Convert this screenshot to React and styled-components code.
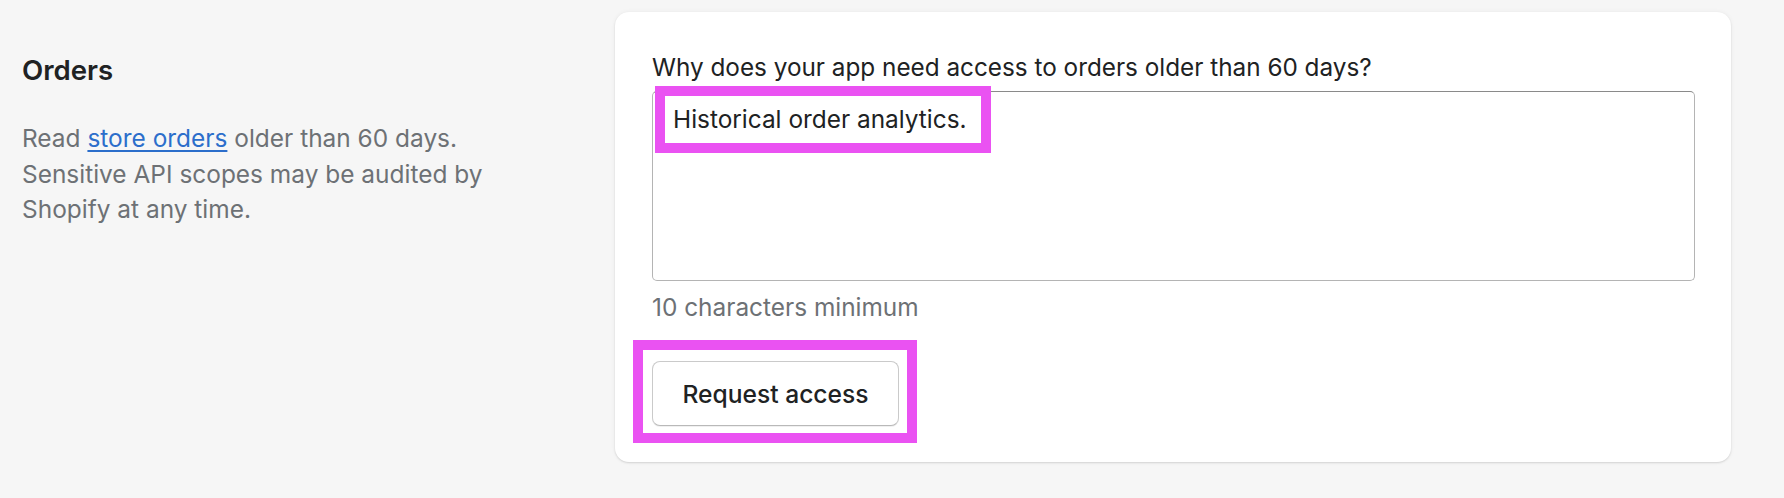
import React from "react";
import styled, { createGlobalStyle } from "styled-components";

const GlobalStyle = createGlobalStyle`
  html, body {
    margin: 0;
    padding: 0;
    background: #f6f6f6;
  }
  body {
    font-family: Inter, "Noto Sans", "Liberation Sans", sans-serif;
    -webkit-font-smoothing: antialiased;
  }
  * { box-sizing: border-box; }
`;

const Page = styled.main`
  display: grid;
  grid-template-columns: 593px 1116px;
  align-items: start;
  padding: 12px 0 0 22px;
  min-height: 498px;
`;

const Aside = styled.section`
  padding-top: 40px;
`;

const Heading = styled.h2`
  margin: 0;
  font-size: 27.6px;
  line-height: 36px;
  font-weight: 600;
  color: #202223;
`;

const Description = styled.p`
  margin: 33px 0 0;
  max-width: 490px;
  font-size: 24.45px;
  line-height: 35.6px;
  color: #6d7175;
`;

const Link = styled.a`
  color: #2c6ecb;
  text-decoration: underline;
  text-underline-offset: 3px;
  text-decoration-thickness: 2px;
`;

const Card = styled.div`
  background: #ffffff;
  border-radius: 14px;
  padding: 37px 36px 36px 37px;
  box-shadow: 0 0 5px rgba(23, 24, 24, 0.05), 0 1px 2px rgba(0, 0, 0, 0.12);
`;

const Label = styled.label`
  display: block;
  margin-bottom: 6px;
  font-size: 24.3px;
  line-height: 36px;
  color: #202223;
`;

const Field = styled.div`
  position: relative;
`;

const TextArea = styled.textarea`
  display: block;
  width: 100%;
  height: 190px;
  margin: 0;
  padding: 9px 20px;
  border: 1px solid #b4b4b4;
  border-top-color: #8a8a8a;
  border-radius: 5px;
  background: #ffffff;
  font-family: inherit;
  font-size: 24.4px;
  line-height: 36px;
  color: #202223;
  resize: none;
  outline: none;
`;

const Highlight = styled.span`
  position: absolute;
  top: ${(p) => p.$top}px;
  left: ${(p) => p.$left}px;
  width: ${(p) => p.$width}px;
  height: ${(p) => p.$height}px;
  border: 10px solid #ea52f2;
  pointer-events: none;
`;

const Help = styled.div`
  margin-top: 8px;
  font-size: 24.4px;
  line-height: 36px;
  color: #6d7175;
`;

const Actions = styled.div`
  margin-top: 36px;
  display: flex;
`;

const ButtonWrap = styled.div`
  position: relative;
`;

const Button = styled.button`
  display: block;
  width: 247px;
  height: 65px;
  padding: 0;
  border: 1px solid #cacaca;
  border-bottom-color: #b9b9b9;
  border-radius: 8px;
  background: #ffffff;
  box-shadow: 0 1px 0 rgba(0, 0, 0, 0.06);
  font-family: inherit;
  font-size: 24.6px;
  font-weight: 500;
  color: #202223;
  cursor: pointer;
`;

export default function App() {
  return (
    <>
      <GlobalStyle />
      <Page>
        <Aside>
          <Heading>Orders</Heading>
          <Description>
            Read <Link href="#">store orders</Link> older than 60 days.
            Sensitive API scopes may be audited by Shopify at any time.
          </Description>
        </Aside>
        <Card>
          <Label htmlFor="reason">
            Why does your app need access to orders older than 60 days?
          </Label>
          <Field>
            <TextArea id="reason" readOnly value="Historical order analytics." />
            <Highlight $top={-5} $left={3} $width={336} $height={67} />
          </Field>
          <Help>10 characters minimum</Help>
          <Actions>
            <ButtonWrap>
              <Button type="button">Request access</Button>
              <Highlight $top={-21} $left={-19} $width={284} $height={103} />
            </ButtonWrap>
          </Actions>
        </Card>
      </Page>
    </>
  );
}
